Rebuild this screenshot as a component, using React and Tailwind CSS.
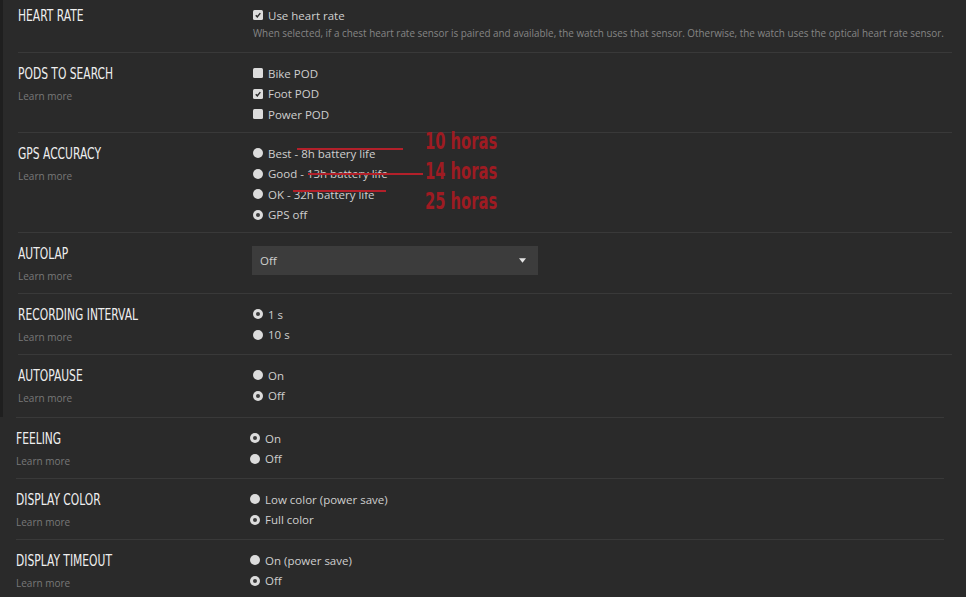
import React from 'react'

const body = "font-['Open_Sans',sans-serif]"
const cond = "font-['DejaVu_Sans',sans-serif]"

function Check({ checked }) {
  return (
    <span className="w-[10px] h-[10px] rounded-[1.5px] bg-[#dcdcdc] flex items-center justify-center shrink-0">
      {checked && (
        <svg viewBox="0 0 10 10" className="w-[8px] h-[8px]">
          <path d="M2.2 5.3 L4.1 7.3 L7.9 2.6" stroke="#2b2b2b" strokeWidth="1.8" fill="none" />
        </svg>
      )}
    </span>
  )
}

function Radio({ on }) {
  return (
    <span className="w-[10px] h-[10px] rounded-full bg-[#dcdcdc] flex items-center justify-center shrink-0">
      {on && <span className="w-[4px] h-[4px] rounded-full bg-[#3c3c3c]" />}
    </span>
  )
}

function Option({ type = 'radio', on, children }) {
  return (
    <div className={`flex items-center gap-[5px] h-[20.5px] text-[11.5px] text-[#cfcfcf] ${body}`}>
      {type === 'check' ? <Check checked={on} /> : <Radio on={on} />}
      <span>{children}</span>
    </div>
  )
}

function Row({ title, learn = true, labelW = 'w-[235px]', className = '', children }) {
  return (
    <div className={`flex pt-[10px] border-b border-[#393939] ${className}`}>
      <div className={`${labelW} shrink-0`}>
        <div className="h-[20px] leading-[20px] whitespace-nowrap">
          <span className={`inline-block origin-left scale-x-[0.67] text-[16px] text-[#efefef] uppercase ${cond}`}>
            {title}
          </span>
        </div>
        {learn && <div className={`mt-[5px] text-[10px] leading-[16px] text-[#787878] ${body}`}>Learn more</div>}
      </div>
      <div className="flex-1 flex flex-col">{children}</div>
    </div>
  )
}

function Note({ children, className }) {
  return (
    <div
      className={`absolute left-[407px] whitespace-nowrap origin-left scale-x-[0.64] text-[23px] leading-[22px] font-bold text-[#9e1b22] ${cond} ${className}`}
    >
      {children}
    </div>
  )
}

export default function App() {
  return (
    <div className="w-[966px] h-[597px] bg-[#2a2a2a] overflow-hidden">
      {/* upper panel */}
      <div className="flex">
        <div className="w-[3px] bg-[#1f1f1f] shrink-0" />
        <div className="flex-1 pl-[15px] pr-[14px] -mt-[5px]">
          <Row title="Heart rate" learn={false} className="h-[58px]">
            <Option type="check" on>Use heart rate</Option>
            <div className={`text-[9.9px] leading-[14px] text-[#858585] whitespace-nowrap ${body}`}>
              When selected, if a chest heart rate sensor is paired and available, the watch uses that sensor. Otherwise, the watch uses the optical heart rate sensor.
            </div>
          </Row>
          <Row title="Pods to search" className="h-[80px]">
            <Option type="check">Bike POD</Option>
            <Option type="check" on>Foot POD</Option>
            <Option type="check">Power POD</Option>
          </Row>
          <div className="relative">
            <Row title="GPS accuracy" className="h-[100px]">
              <Option>Best - 8h battery life</Option>
              <Option>Good - 13h battery life</Option>
              <Option>OK - 32h battery life</Option>
              <Option on>GPS off</Option>
            </Row>
            {/* hand-drawn annotations */}
            <div className="absolute left-[279px] top-[15px] w-[106px] h-[1.5px] bg-[#b3202a]" />
            <div className="absolute left-[290px] top-[40px] w-[115px] h-[1.5px] bg-[#b3202a]" />
            <div className="absolute left-[275px] top-[57px] w-[93px] h-[1.5px] bg-[#b3202a]" />
            <Note className="-top-[3px]">10 horas</Note>
            <Note className="top-[27px]">14 horas</Note>
            <Note className="top-[57px]">25 horas</Note>
          </div>
          <Row title="Autolap" className="h-[61px]">
            <div className="mt-[3px] -ml-[1px] w-[286px] h-[29px] bg-[#3c3c3c] flex items-center justify-between pl-[8px] pr-[12px]">
              <span className={`text-[11.5px] text-[#cfcfcf] ${body}`}>Off</span>
              <svg viewBox="0 0 8 5" className="w-[7px] h-[5px]">
                <path d="M0 0 H8 L4 5 Z" fill="#e5e5e5" />
              </svg>
            </div>
          </Row>
          <Row title="Recording interval" className="h-[61px]">
            <Option on>1 s</Option>
            <Option>10 s</Option>
          </Row>
          <Row title="Autopause" className="h-[62px] border-b-0">
            <Option>On</Option>
            <Option on>Off</Option>
          </Row>
        </div>
      </div>

      {/* lower panel */}
      <div className="pl-[16px] pr-[22px]">
        <Row title="Feeling" labelW="w-[234px]" className="h-[62px] border-t">
          <Option on>On</Option>
          <Option>Off</Option>
        </Row>
        <Row title="Display color" labelW="w-[234px]" className="h-[61px]">
          <Option>Low color (power save)</Option>
          <Option on>Full color</Option>
        </Row>
        <Row title="Display timeout" labelW="w-[234px]" className="h-[61px] border-b-0">
          <Option>On (power save)</Option>
          <Option on>Off</Option>
        </Row>
      </div>
    </div>
  )
}
